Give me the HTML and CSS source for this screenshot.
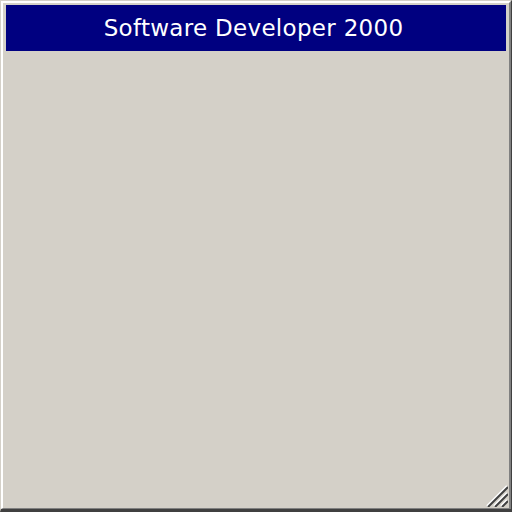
FILE: index.html
```html
<!DOCTYPE html>
<html lang="en">
<head>
    <meta charset="UTF-8">
    <title>Software Developer 2000</title>
    <link rel="stylesheet" href="styles.css">
</head>
<body>
    <div class="window">
        <div class="window-inner">
            <div class="titlebar">Software Developer 2000</div>
            <div class="client"></div>
            <svg class="grip" width="22" height="22" viewBox="0 0 22 22">
                <path d="M21 1 L1 21" stroke="#ffffff" stroke-width="2"/>
                <path d="M22 2 L2 22" stroke="#404040" stroke-width="2"/>
                <path d="M21 8 L8 21" stroke="#ffffff" stroke-width="2"/>
                <path d="M22 9 L9 22" stroke="#404040" stroke-width="2"/>
                <path d="M21 15 L15 21" stroke="#ffffff" stroke-width="2"/>
                <path d="M22 16 L16 22" stroke="#404040" stroke-width="2"/>
            </svg>
        </div>
    </div>
</body>
</html>
```

FILE: styles.css
```css
html, body {
    margin: 0;
    padding: 0;
}
body {
    width: 512px;
    height: 512px;
    background-color: #d4d0c8;
}
.window {
    box-sizing: border-box;
    width: 512px;
    height: 512px;
    border-top: 1px solid #d4d0c8;
    border-left: 1px solid #d4d0c8;
    border-right: 1px solid #404040;
    border-bottom: 3px solid #404040;
    background-color: #d4d0c8;
}
.window-inner {
    position: relative;
    box-sizing: border-box;
    height: 100%;
    border-top: 2px solid #ffffff;
    border-left: 2px solid #ffffff;
    border-right: 2px solid #808080;
    border-bottom: 1px solid #808080;
    padding: 2px 3px 0 3px;
    display: flex;
    flex-direction: column;
}
.titlebar {
    height: 46px;
    padding-right: 5px;
    background-color: #000080;
    color: #ffffff;
    font-family: "DejaVu Sans", sans-serif;
    font-size: 23px;
    line-height: 46px;
    letter-spacing: 0.3px;
    text-align: center;
}
.client {
    flex: 1;
}
.grip {
    position: absolute;
    right: 1px;
    bottom: 1px;
}
```
